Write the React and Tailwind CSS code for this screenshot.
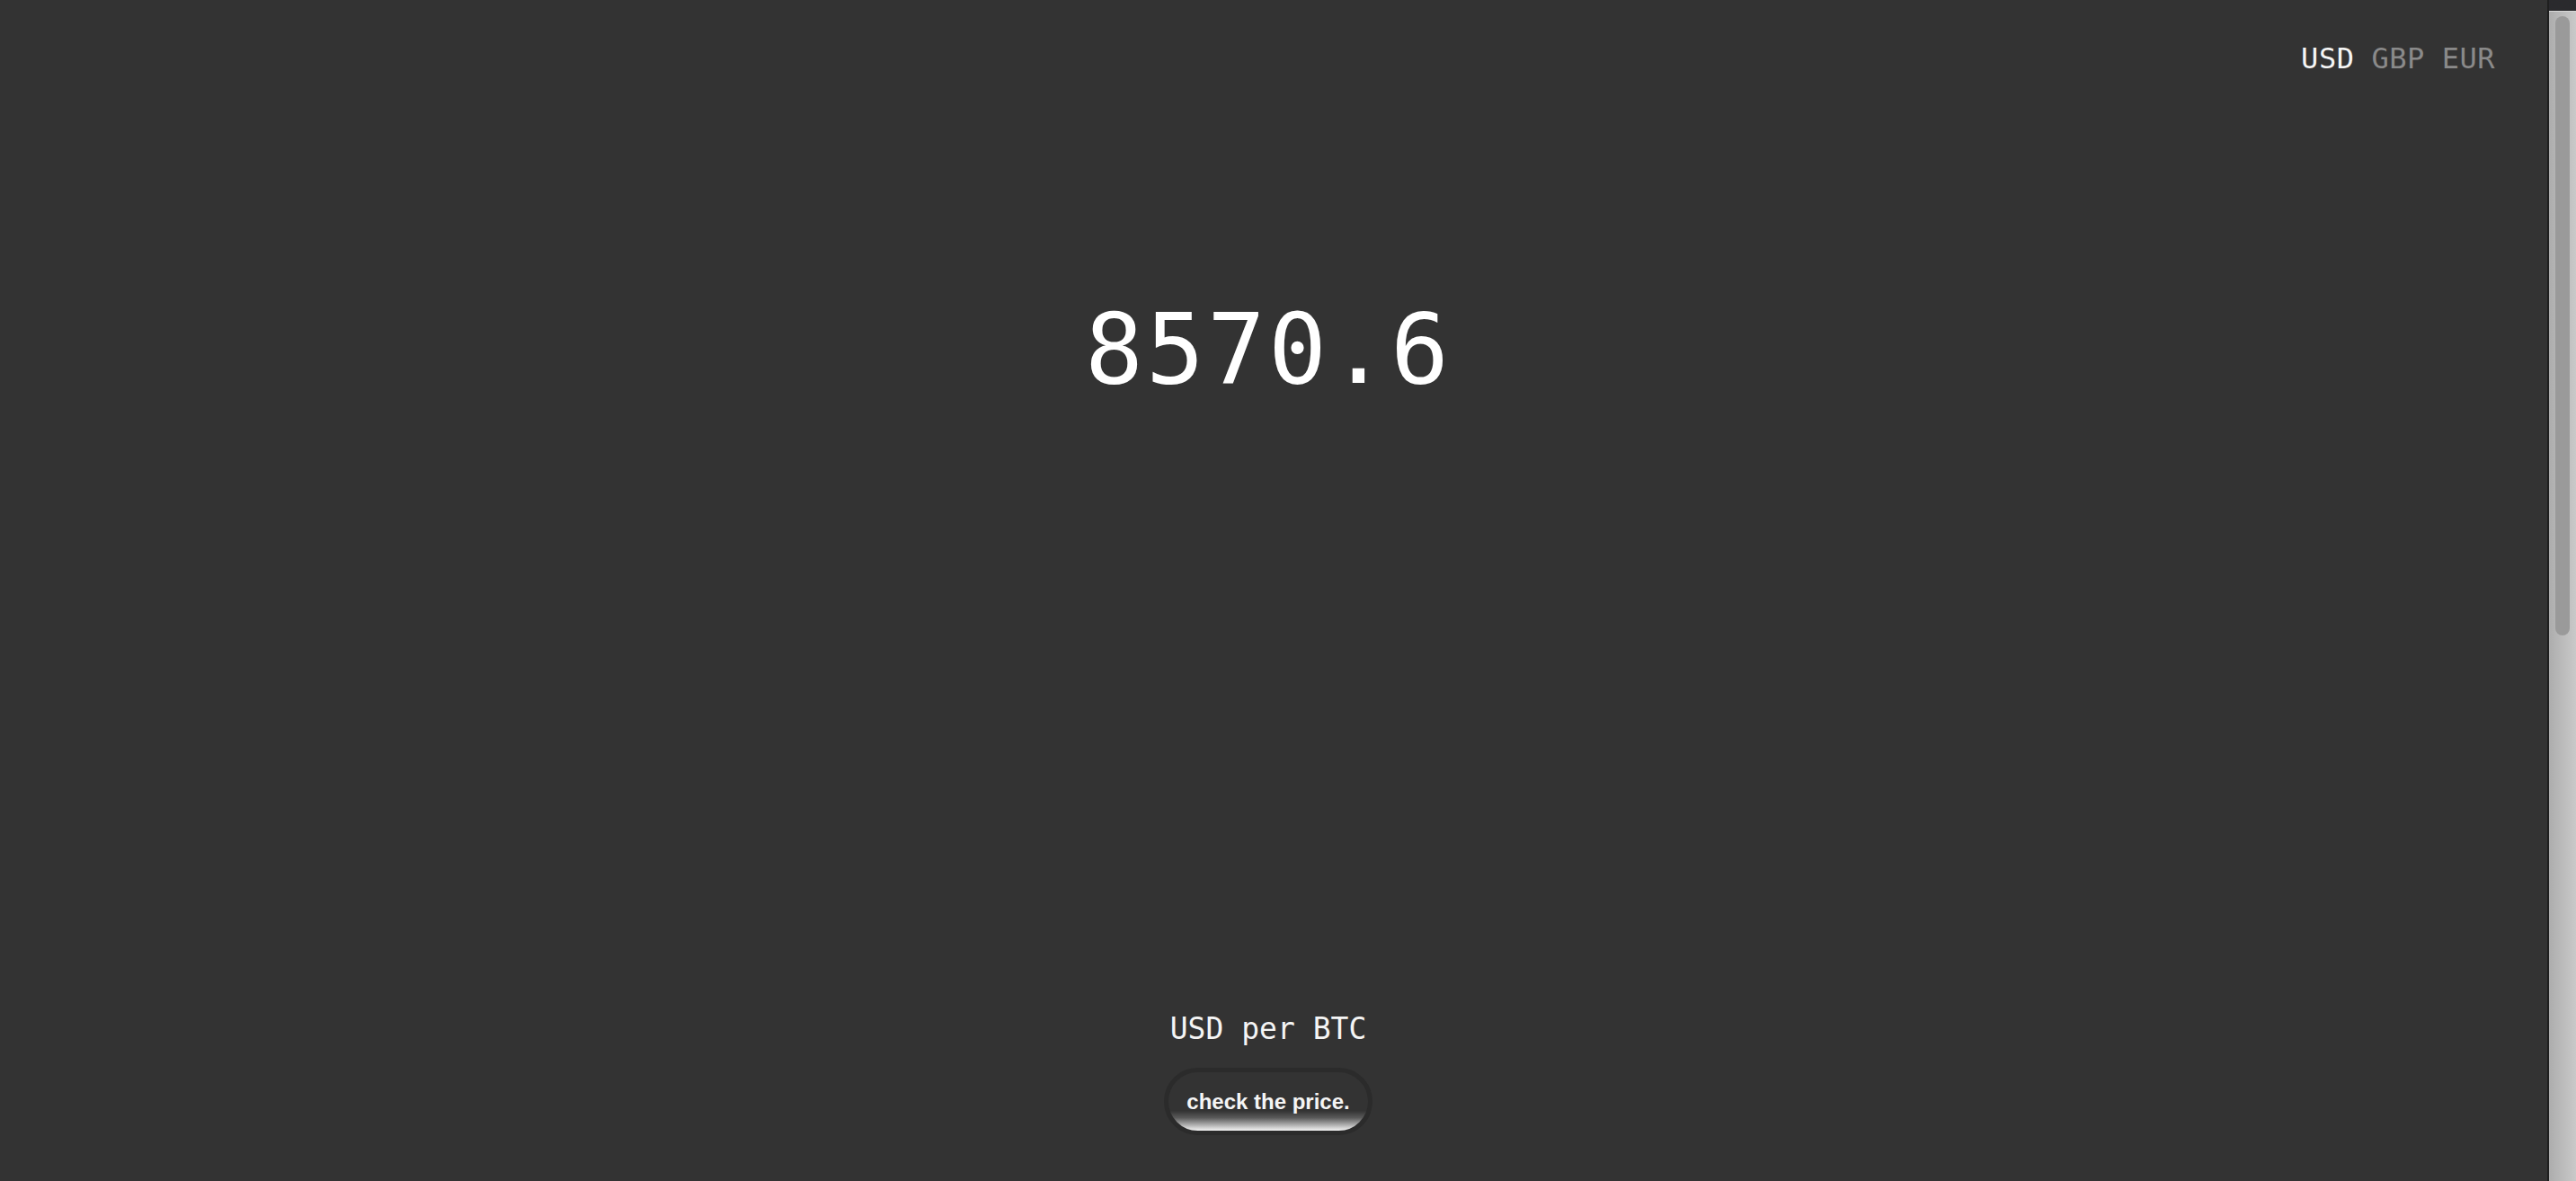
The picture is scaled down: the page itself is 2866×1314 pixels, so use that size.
export default function App() {
  const mono = { fontFamily: '"DejaVu Sans Mono", monospace' };
  return (
    <div className="flex h-screen w-full overflow-hidden bg-[#333333]">
      <div className="flex flex-1 flex-col pr-[12px]" style={mono}>
        <div className="flex justify-end pt-[47px] pr-[46px] text-[32px] leading-[37px] tracking-[0.5px]">
          <span className="text-[#f5f5f5]">USD</span>
          <span className="ml-[19px] text-[#8a8a8a]">GBP</span>
          <span className="ml-[19px] text-[#8a8a8a]">EUR</span>
        </div>
        <div className="mt-[251px] flex justify-center">
          <span className="text-[108px] leading-none tracking-[3px] text-white">8570.6</span>
        </div>
        <div className="flex-1" />
        <div className="flex flex-col items-center pb-[51px]">
          <span className="text-[33px] leading-none text-[#f5f5f5]">USD per BTC</span>
          <button className="mt-[27px] flex h-[75px] w-[232px] items-center justify-center rounded-full border-[5px] border-[#2b2b2b] bg-[linear-gradient(to_bottom,#333333_0%,#333333_66%,#5a5a5a_78%,#f4f4f4_100%)]">
            <span
              className="text-[24px] font-bold leading-none text-[#f5f5f5]"
              style={{ fontFamily: '"Liberation Sans", Arial, sans-serif' }}
            >
              check the price.
            </span>
          </button>
        </div>
      </div>
      <div className="flex w-[32px] flex-col border-l-2 border-[#1f1f1f]">
        <div className="h-[12px] bg-[#2a2a2d]" />
        <div className="flex flex-1 flex-col border-t border-[#d8d8d8] bg-[linear-gradient(to_right,#adadad,#c9c9c9)]">
          <div className="ml-[7px] mt-[5px] h-[689px] w-[16px] rounded-full bg-[#9a9a9a]" />
        </div>
      </div>
    </div>
  );
}
